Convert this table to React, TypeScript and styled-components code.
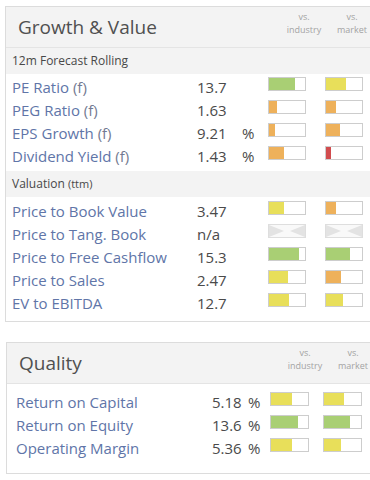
import styled, { createGlobalStyle } from "styled-components";

const GlobalStyle = createGlobalStyle`
  html, body {
    margin: 0;
    padding: 0;
    background: #fff;
    overflow: hidden;
  }
  body {
    font-family: 'Open Sans', 'Liberation Sans', sans-serif;
  }
`;

const colors = {
    green: "#a9cf74",
    yellow: "#e8df5a",
    orange: "#eeb15b",
    red: "#d14c4e",
};

type Tone = keyof typeof colors;

const Page = styled.div`
    padding: 6px 0 0 5px;
    display: flex;
    flex-direction: column;
    gap: 20px;
`;

const Card = styled.section<{ $shift?: number }>`
    width: 380px;
    margin-left: ${p => p.$shift ?? 0}px;
    border: 1px solid #dcdcdc;
    background: #fff;
`;

const Header = styled.div`
    height: 40px;
    display: flex;
    background: #f3f3f3;
    border-bottom: 1px solid #e4e4e4;
    padding-right: 10px;
`;

const Title = styled.h2`
    flex: 1;
    margin: 0;
    padding-left: 12px;
    font-size: 19px;
    font-weight: 400;
    line-height: 40px;
    color: #505050;
`;

const HeadCol = styled.div`
    width: 48px;
    padding-top: 3px;
    text-align: center;
    font-size: 9px;
    line-height: 13px;
    color: #a3a3a3;
`;

const SubHeader = styled.div`
    height: 26px;
    padding-left: 6px;
    background: #f3f3f3;
    font-size: 12px;
    line-height: 26px;
    color: #484848;
`;

const Small = styled.span`
    font-size: 11px;
`;

const Rows = styled.div<{ $top: number; $bottom: number; $left: number }>`
    padding: ${p => p.$top}px 0 ${p => p.$bottom}px ${p => p.$left}px;
`;

const Row = styled.div<{ $cols: string }>`
    display: grid;
    grid-template-columns: ${p => p.$cols};
    align-items: start;
    height: 23px;
    font-size: 15px;
    line-height: 23px;
`;

const Label = styled.span`
    color: #6075a8;
    white-space: nowrap;
`;

const Suffix = styled.span`
    color: #737a92;
`;

const Value = styled.span`
    color: #4a4a4a;
`;

const BarPair = styled.div<{ $gap: number }>`
    display: flex;
    gap: ${p => p.$gap}px;
    padding-top: 1px;
`;

const Bar = styled.div<{ $w: number }>`
    box-sizing: border-box;
    width: ${p => p.$w}px;
    height: 14px;
    border: 1px solid #cdcdcd;
    background: #fff;
    display: flex;
`;

const Fill = styled.div<{ $tone: Tone }>`
    height: 100%;
    background: ${p => colors[p.$tone]};
`;

const EmptyBar = styled(Bar)`
    border-color: #dedede;
    background: #f9f9f9;
`;

type Score = [number, Tone] | null;

interface Metric {
    label: string;
    suffix?: string;
    value: string;
    pct?: boolean;
    industry: Score;
    market: Score;
}

function ScoreBar(props: { score: Score; width: number }) {
    if (!props.score) {
        return (
            <EmptyBar $w={props.width}>
                <svg width={props.width - 2} height={12} viewBox="0 0 36 12">
                    <polygon points="0,0 15,6 0,12" fill="#e3e3e3" />
                    <polygon points="36,0 21,6 36,12" fill="#e3e3e3" />
                </svg>
            </EmptyBar>
        );
    }
    const [fill, tone] = props.score;
    return (
        <Bar $w={props.width}>
            <Fill $tone={tone} style={{ width: fill - 1 }} />
        </Bar>
    );
}

function MetricRow(props: { m: Metric; cols: string; gap: number; barWidth: number }) {
    const { m } = props;
    return (
        <Row $cols={props.cols}>
            <Label>
                {m.label}
                {m.suffix && <Suffix> {m.suffix}</Suffix>}
            </Label>
            <Value>{m.value}</Value>
            <Value>{m.pct ? "%" : ""}</Value>
            <BarPair $gap={props.gap}>
                <ScoreBar score={m.industry} width={props.barWidth} />
                <ScoreBar score={m.market} width={props.barWidth} />
            </BarPair>
        </Row>
    );
}

const forecast: Metric[] = [
    { label: "PE Ratio", suffix: "(f)", value: "13.7", industry: [27, "green"], market: [21, "yellow"] },
    { label: "PEG Ratio", suffix: "(f)", value: "1.63", industry: [9, "orange"], market: [11, "orange"] },
    { label: "EPS Growth", suffix: "(f)", value: "9.21", pct: true, industry: [7, "orange"], market: [15, "orange"] },
    { label: "Dividend Yield", suffix: "(f)", value: "1.43", pct: true, industry: [16, "orange"], market: [6, "red"] },
];

const valuation: Metric[] = [
    { label: "Price to Book Value", value: "3.47", industry: [16, "yellow"], market: [11, "orange"] },
    { label: "Price to Tang. Book", value: "n/a", industry: null, market: null },
    { label: "Price to Free Cashflow", value: "15.3", industry: [31, "green"], market: [25, "green"] },
    { label: "Price to Sales", value: "2.47", industry: [20, "yellow"], market: [16, "orange"] },
    { label: "EV to EBITDA", value: "12.7", industry: [21, "yellow"], market: [18, "yellow"] },
];

const quality: Metric[] = [
    { label: "Return on Capital", value: "5.18", pct: true, industry: [22, "yellow"], market: [21, "yellow"] },
    { label: "Return on Equity", value: "13.6", pct: true, industry: [28, "green"], market: [27, "green"] },
    { label: "Operating Margin", value: "5.36", pct: true, industry: [22, "yellow"], market: [18, "yellow"] },
];

function CardHeader(props: { title: string }) {
    return (
        <Header>
            <Title>{props.title}</Title>
            <HeadCol>vs.<br />industry</HeadCol>
            <HeadCol>vs.<br />market</HeadCol>
        </Header>
    );
}

const growthCols = "185px 45px 26px auto";
const qualityCols = "196px 36px 22px auto";

export default function App() {
    return (
        <>
            <GlobalStyle />
            <Page>
                <Card>
                    <CardHeader title="Growth & Value" />
                    <SubHeader>12m Forecast Rolling</SubHeader>
                    <Rows $top={2} $bottom={3} $left={6}>
                        {forecast.map(m => (
                            <MetricRow key={m.label} m={m} cols={growthCols} gap={19} barWidth={38} />
                        ))}
                    </Rows>
                    <SubHeader>Valuation <Small>(ttm)</Small></SubHeader>
                    <Rows $top={3} $bottom={6} $left={6}>
                        {valuation.map(m => (
                            <MetricRow key={m.label} m={m} cols={growthCols} gap={19} barWidth={38} />
                        ))}
                    </Rows>
                </Card>
                <Card $shift={1}>
                    <CardHeader title="Quality" />
                    <Rows $top={7} $bottom={13} $left={9}>
                        {quality.map(m => (
                            <MetricRow key={m.label} m={m} cols={qualityCols} gap={14} barWidth={39} />
                        ))}
                    </Rows>
                </Card>
            </Page>
        </>
    );
}
